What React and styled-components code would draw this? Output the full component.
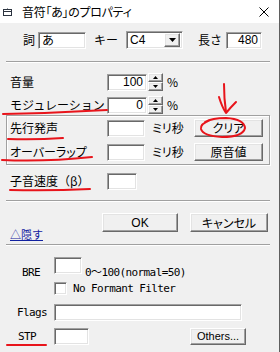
import styled, { createGlobalStyle } from "styled-components";

const GlobalStyle = createGlobalStyle`
  html, body {
    margin: 0;
    padding: 0;
    background: #f0f0f0;
  }
  body {
    font-family: "Noto Sans CJK JP", "Noto Sans", sans-serif;
    font-size: 12px;
    color: #000;
  }
`;

// 音符プロパティのダイアログ
function App() {
  return (
    <>
      <GlobalStyle />
      <Window>
        <TitleBar>
          <TitleIcon />
          <TitleText>音符「あ」のプロパティ</TitleText>
          <CloseIcon />
        </TitleBar>

        <FieldRow $mt={8} $h={18} $pl={23}>
          <Label $w={15}>詞</Label>
          <TextBox $w={48}>あ</TextBox>
          <Label $w={32} $ml={8}>キー</Label>
          <Select>
            <SelectValue>C4</SelectValue>
            <DropButton>
              <svg width="7" height="4" viewBox="0 0 7 4">
                <path d="M0 0H7L3.5 4Z" fill="#000" />
              </svg>
            </DropButton>
          </Select>
          <Label $w={28} $ml={15}>長さ</Label>
          <TextBox $w={36} $num>480</TextBox>
        </FieldRow>

        <Separator $mt={12} />

        <FieldRow $mt={10} $h={18} $pl={10}>
          <Label $w={97}>音量</Label>
          <TextBox $w={40} $num>100</TextBox>
          <Spinner />
          <Label $ml={4}>%</Label>
        </FieldRow>
        <FieldRow $mt={5} $h={18} $pl={10}>
          <Label $w={97}>モジュレーション</Label>
          <TextBox $w={40} $num>0</TextBox>
          <Spinner />
          <Label $ml={4}>%</Label>
        </FieldRow>

        <GroupBox>
          <FieldRow $h={18}>
            <Label $w={97}>先行発声</Label>
            <TextBox $w={38} />
            <Label $w={42} $ml={7} $palt>ミリ秒</Label>
            <Button $w={69} $h={18} $palt>クリア</Button>
          </FieldRow>
          <FieldRow $mt={6} $h={18}>
            <Label $w={97} $palt>オーバーラップ</Label>
            <TextBox $w={38} />
            <Label $w={42} $ml={7} $palt>ミリ秒</Label>
            <Button $w={69} $h={18}>原音値</Button>
          </FieldRow>
        </GroupBox>

        <FieldRow $mt={7} $h={18} $pl={10}>
          <Label $w={97}>子音速度（β）</Label>
          <TextBox $w={30} />
        </FieldRow>

        <Separator $mt={10} />

        <ButtonRow>
          <HideLink>△隠す</HideLink>
          <Button $w={76} $h={19} $latin>OK</Button>
          <Button $w={78} $h={19} $ml={12} $palt>キャンセル</Button>
        </ButtonRow>

        <Separator $mt={3} />

        <FieldRow $mt={11} $h={23} $pl={22} $top>
          <MonoText $w={32} $mt={9}>BRE</MonoText>
          <TextBox $w={28} />
          <MonoText $ml={3} $mt={9}>0〜100(normal=50)</MonoText>
        </FieldRow>

        <FieldRow $mt={2} $h={13} $pl={54}>
          <CheckBox />
          <MonoText $ml={6}>No Formant Filter</MonoText>
        </FieldRow>

        <FieldRow $mt={9} $h={17} $pl={17}>
          <MonoText $w={37}>Flags</MonoText>
          <TextBox $w={188} />
        </FieldRow>

        <FieldRow $mt={7} $h={17} $pl={18}>
          <MonoText $w={36}>STP</MonoText>
          <TextBox $w={35} />
          <Button $w={56} $h={17} $ml={101} $latin $small>
            Others...
          </Button>
        </FieldRow>

        <Annotations />
      </Window>
    </>
  );
}

export default App;

// タイトルバーの小さいアイコン
function TitleIcon() {
  return (
    <svg width="10" height="9" viewBox="0 0 10 9" style={{ marginTop: 2 }}>
      <path d="M0.5 1.5H4.5V0.5" fill="none" stroke="#2c3440" />
      <rect x="0.5" y="1.5" width="8" height="6" fill="none" stroke="#2c3440" />
      <path d="M1 3.5H9" stroke="#2c3440" />
    </svg>
  );
}

function CloseIcon() {
  return (
    <CloseSvg width="10" height="10" viewBox="0 0 10 10">
      <path d="M0.5 0.5L9.5 9.5M9.5 0.5L0.5 9.5" stroke="#000" strokeWidth="1" />
    </CloseSvg>
  );
}

// 上下のスピンボタン
function Spinner() {
  return (
    <SpinBox>
      <SpinButton>
        <svg width="5" height="3" viewBox="0 0 5 3">
          <path d="M2.5 0L5 3H0Z" fill="#000" />
        </svg>
      </SpinButton>
      <SpinButton>
        <svg width="5" height="3" viewBox="0 0 5 3">
          <path d="M0 0H5L2.5 3Z" fill="#000" />
        </svg>
      </SpinButton>
    </SpinBox>
  );
}

// 赤ペンの書き込み
function Annotations() {
  return (
    <Overlay width="280" height="352" viewBox="0 0 280 352">
      <g
        fill="none"
        stroke="#e8141b"
        strokeWidth="2"
        strokeLinecap="round"
        strokeLinejoin="round"
      >
        <path d="M3 114 Q55 113 107 110" />
        <path d="M8 139 Q35 140 63 138" />
        <path d="M2 160 Q45 162 92 157" />
        <path d="M10 190 Q50 191 90 189" />
        <path d="M7 345 L46 345" />
        <path d="M224 84 Q224 99 226 112" />
        <path d="M219 97 Q222 107 226 113 Q231 107 236 102" />
        <path d="M210 120 Q200 124 201 129 Q203 136 222 137 Q243 137 245 128 Q244 119 226 118 Q212 118 205 122" />
      </g>
    </Overlay>
  );
}

const Window = styled.div`
  position: relative;
  width: 279px;
  height: 352px;
  background: #f0f0f0;
  border-right: 1px solid #5f5f5f;
  display: flex;
  flex-direction: column;
  overflow: hidden;
`;

const TitleBar = styled.div`
  height: 23px;
  flex: none;
  background: #fff;
  display: flex;
  align-items: center;
  padding-left: 3px;
`;

const TitleText = styled.span`
  margin-left: 9px;
  font-size: 12px;
  font-feature-settings: "palt";
  letter-spacing: -0.3px;
  color: #000;
  line-height: 1;
`;

const CloseSvg = styled.svg`
  margin-left: auto;
  margin-right: 10px;
`;

const FieldRow = styled.div`
  display: flex;
  align-items: ${({ $top }) => ($top ? "flex-start" : "center")};
  height: ${({ $h }) => $h}px;
  margin-top: ${({ $mt = 0 }) => $mt}px;
  padding-left: ${({ $pl = 0 }) => $pl}px;
  flex: none;
`;

const Label = styled.span`
  flex: none;
  width: ${({ $w }) => ($w ? `${$w}px` : "auto")};
  margin-left: ${({ $ml = 0 }) => $ml}px;
  font-size: 12px;
  line-height: 14px;
  white-space: nowrap;
  font-feature-settings: ${({ $palt }) => ($palt ? '"palt"' : "normal")};
`;

const MonoText = styled.span`
  flex: none;
  width: ${({ $w }) => ($w ? `${$w}px` : "auto")};
  margin-left: ${({ $ml = 0 }) => $ml}px;
  margin-top: ${({ $mt = 0 }) => $mt}px;
  font-family: "DejaVu Sans Mono", "Noto Sans CJK JP", monospace;
  font-size: 11px;
  letter-spacing: -0.6px;
  line-height: 14px;
  white-space: nowrap;
`;

const sunken = `
  box-sizing: border-box;
  border: 1px solid;
  border-color: #a0a0a0 #fff #fff #a0a0a0;
  box-shadow: inset 1px 1px 0 #696969, inset -1px -1px 0 #e3e3e3;
`;

const TextBox = styled.div`
  ${sunken}
  flex: none;
  width: ${({ $w }) => $w}px;
  height: 17px;
  background: #fff;
  display: flex;
  align-items: center;
  justify-content: ${({ $num }) => ($num ? "flex-end" : "flex-start")};
  padding: 0 3px;
  font-family: ${({ $num }) =>
    $num ? '"Liberation Sans", sans-serif' : '"Noto Sans CJK JP", sans-serif'};
  font-size: 12px;
  line-height: 1;
`;

const Select = styled.div`
  ${sunken}
  flex: none;
  width: 57px;
  height: 18px;
  background: #fff;
  display: flex;
  align-items: center;
  padding: 2px;
`;

const SelectValue = styled.span`
  flex: 1;
  padding-left: 1px;
  font-family: "Liberation Sans", sans-serif;
  font-size: 12px;
`;

const raised = `
  box-sizing: border-box;
  border: 1px solid;
  border-color: #fff #696969 #696969 #fff;
  box-shadow: inset -1px -1px 0 #a0a0a0, inset 1px 1px 0 #e3e3e3;
  background: #f0f0f0;
`;

const DropButton = styled.div`
  ${raised}
  width: 16px;
  height: 14px;
  display: flex;
  align-items: center;
  justify-content: center;
`;

const SpinBox = styled.div`
  flex: none;
  width: 15px;
  height: 18px;
  margin-left: 1px;
  display: flex;
  flex-direction: column;
`;

const SpinButton = styled.div`
  ${raised}
  flex: 1;
  display: flex;
  align-items: center;
  justify-content: center;
`;

const Separator = styled.div`
  flex: none;
  height: 0;
  border-top: 1px solid #a0a0a0;
  border-bottom: 1px solid #fff;
  margin: ${({ $mt = 0 }) => $mt}px 9px 0 6px;
`;

const GroupBox = styled.div`
  flex: none;
  margin: 1px 9px 0 6px;
  padding: 3px 0 3px 3px;
  border: 1px solid #a0a0a0;
  box-shadow: inset 1px 1px 0 #fff, 1px 1px 0 #fff;
  display: flex;
  flex-direction: column;
`;

const Button = styled.div`
  ${raised}
  flex: none;
  width: ${({ $w }) => $w}px;
  height: ${({ $h }) => $h}px;
  margin-left: ${({ $ml = 0 }) => $ml}px;
  display: flex;
  align-items: center;
  justify-content: center;
  font-family: ${({ $latin }) =>
    $latin
      ? '"Liberation Sans", "Noto Sans CJK JP", sans-serif'
      : '"Noto Sans CJK JP", sans-serif'};
  font-size: ${({ $small }) => ($small ? 11 : 12)}px;
  font-feature-settings: ${({ $palt }) => ($palt ? '"palt"' : "normal")};
  line-height: 1;
`;

const ButtonRow = styled.div`
  flex: none;
  display: flex;
  align-items: flex-start;
  margin-top: 11px;
  padding-left: 10px;
`;

const HideLink = styled.span`
  flex: none;
  width: 92px;
  margin-top: 14px;
  font-size: 11px;
  line-height: 14px;
  color: #1020a0;
  text-decoration: underline;
`;

const CheckBox = styled.div`
  ${sunken}
  flex: none;
  width: 13px;
  height: 13px;
  background: #fff;
`;

const Overlay = styled.svg`
  position: absolute;
  left: 0;
  top: 0;
  pointer-events: none;
`;
